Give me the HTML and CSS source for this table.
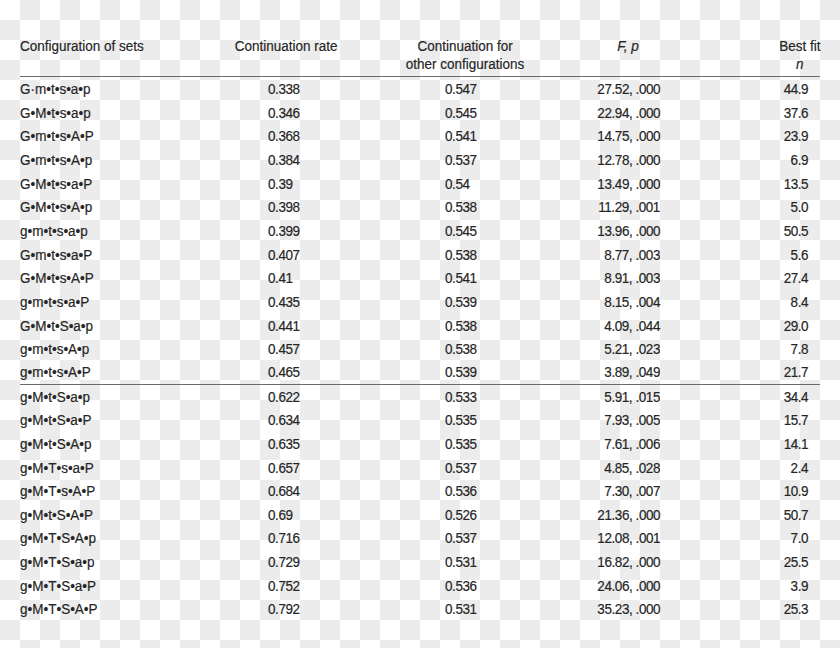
FILE: index.html
```html
<!DOCTYPE html>
<html lang="en">
<head>
<meta charset="utf-8">
<title>Configuration of sets</title>
<link rel="stylesheet" href="styles.css">
</head>
<body>
<div class="table">
  <div class="head">
    <div class="c1"><span class="t">Configuration of sets</span></div>
    <div class="c2h"><span class="t">Continuation rate</span></div>
    <div class="c3h"><span class="t">Continuation for<br>other configurations</span></div>
    <div class="c4h"><span class="t"><i>F, p</i></span></div>
    <div class="c5h"><span class="t stack">Best fit<br><i>n</i></span></div>
  </div>
  <div class="row"><div class="c1"><span class="t">G·m•t•s•a•p</span></div><div class="c2"><span class="t">0.338</span></div><div class="c3"><span class="t">0.547</span></div><div class="c4"><span class="t">27.52, .000</span></div><div class="c5"><span class="t">44.9</span></div></div>
  <div class="row"><div class="c1"><span class="t">G•M•t•s•a•p</span></div><div class="c2"><span class="t">0.346</span></div><div class="c3"><span class="t">0.545</span></div><div class="c4"><span class="t">22.94, .000</span></div><div class="c5"><span class="t">37.6</span></div></div>
  <div class="row"><div class="c1"><span class="t">G•m•t•s•A•P</span></div><div class="c2"><span class="t">0.368</span></div><div class="c3"><span class="t">0.541</span></div><div class="c4"><span class="t">14.75, .000</span></div><div class="c5"><span class="t">23.9</span></div></div>
  <div class="row"><div class="c1"><span class="t">G•m•t•s•A•p</span></div><div class="c2"><span class="t">0.384</span></div><div class="c3"><span class="t">0.537</span></div><div class="c4"><span class="t">12.78, .000</span></div><div class="c5"><span class="t">6.9</span></div></div>
  <div class="row"><div class="c1"><span class="t">G•M•t•s•a•P</span></div><div class="c2"><span class="t">0.39</span></div><div class="c3"><span class="t">0.54</span></div><div class="c4"><span class="t">13.49, .000</span></div><div class="c5"><span class="t">13.5</span></div></div>
  <div class="row"><div class="c1"><span class="t">G•M•t•s•A•p</span></div><div class="c2"><span class="t">0.398</span></div><div class="c3"><span class="t">0.538</span></div><div class="c4"><span class="t">11.29, .001</span></div><div class="c5"><span class="t">5.0</span></div></div>
  <div class="row"><div class="c1"><span class="t">g•m•t•s•a•p</span></div><div class="c2"><span class="t">0.399</span></div><div class="c3"><span class="t">0.545</span></div><div class="c4"><span class="t">13.96, .000</span></div><div class="c5"><span class="t">50.5</span></div></div>
  <div class="row"><div class="c1"><span class="t">G•m•t•s•a•P</span></div><div class="c2"><span class="t">0.407</span></div><div class="c3"><span class="t">0.538</span></div><div class="c4"><span class="t">8.77, .003</span></div><div class="c5"><span class="t">5.6</span></div></div>
  <div class="row"><div class="c1"><span class="t">G•M•t•s•A•P</span></div><div class="c2"><span class="t">0.41</span></div><div class="c3"><span class="t">0.541</span></div><div class="c4"><span class="t">8.91, .003</span></div><div class="c5"><span class="t">27.4</span></div></div>
  <div class="row"><div class="c1"><span class="t">g•m•t•s•a•P</span></div><div class="c2"><span class="t">0.435</span></div><div class="c3"><span class="t">0.539</span></div><div class="c4"><span class="t">8.15, .004</span></div><div class="c5"><span class="t">8.4</span></div></div>
  <div class="row"><div class="c1"><span class="t">G•M•t•S•a•p</span></div><div class="c2"><span class="t">0.441</span></div><div class="c3"><span class="t">0.538</span></div><div class="c4"><span class="t">4.09, .044</span></div><div class="c5"><span class="t">29.0</span></div></div>
  <div class="row"><div class="c1"><span class="t">g•m•t•s•A•p</span></div><div class="c2"><span class="t">0.457</span></div><div class="c3"><span class="t">0.538</span></div><div class="c4"><span class="t">5.21, .023</span></div><div class="c5"><span class="t">7.8</span></div></div>
  <div class="row split"><div class="c1"><span class="t">g•m•t•s•A•P</span></div><div class="c2"><span class="t">0.465</span></div><div class="c3"><span class="t">0.539</span></div><div class="c4"><span class="t">3.89, .049</span></div><div class="c5"><span class="t">21.7</span></div></div>
  <div class="row"><div class="c1"><span class="t">g•M•t•S•a•p</span></div><div class="c2"><span class="t">0.622</span></div><div class="c3"><span class="t">0.533</span></div><div class="c4"><span class="t">5.91, .015</span></div><div class="c5"><span class="t">34.4</span></div></div>
  <div class="row"><div class="c1"><span class="t">g•M•t•S•a•P</span></div><div class="c2"><span class="t">0.634</span></div><div class="c3"><span class="t">0.535</span></div><div class="c4"><span class="t">7.93, .005</span></div><div class="c5"><span class="t">15.7</span></div></div>
  <div class="row"><div class="c1"><span class="t">g•M•t•S•A•p</span></div><div class="c2"><span class="t">0.635</span></div><div class="c3"><span class="t">0.535</span></div><div class="c4"><span class="t">7.61, .006</span></div><div class="c5"><span class="t">14.1</span></div></div>
  <div class="row"><div class="c1"><span class="t">g•M•T•s•a•P</span></div><div class="c2"><span class="t">0.657</span></div><div class="c3"><span class="t">0.537</span></div><div class="c4"><span class="t">4.85, .028</span></div><div class="c5"><span class="t">2.4</span></div></div>
  <div class="row"><div class="c1"><span class="t">g•M•T•s•A•P</span></div><div class="c2"><span class="t">0.684</span></div><div class="c3"><span class="t">0.536</span></div><div class="c4"><span class="t">7.30, .007</span></div><div class="c5"><span class="t">10.9</span></div></div>
  <div class="row"><div class="c1"><span class="t">g•M•t•S•A•P</span></div><div class="c2"><span class="t">0.69</span></div><div class="c3"><span class="t">0.526</span></div><div class="c4"><span class="t">21.36, .000</span></div><div class="c5"><span class="t">50.7</span></div></div>
  <div class="row"><div class="c1"><span class="t">g•M•T•S•A•p</span></div><div class="c2"><span class="t">0.716</span></div><div class="c3"><span class="t">0.537</span></div><div class="c4"><span class="t">12.08, .001</span></div><div class="c5"><span class="t">7.0</span></div></div>
  <div class="row"><div class="c1"><span class="t">g•M•T•S•a•p</span></div><div class="c2"><span class="t">0.729</span></div><div class="c3"><span class="t">0.531</span></div><div class="c4"><span class="t">16.82, .000</span></div><div class="c5"><span class="t">25.5</span></div></div>
  <div class="row"><div class="c1"><span class="t">g•M•T•S•a•P</span></div><div class="c2"><span class="t">0.752</span></div><div class="c3"><span class="t">0.536</span></div><div class="c4"><span class="t">24.06, .000</span></div><div class="c5"><span class="t">3.9</span></div></div>
  <div class="row"><div class="c1"><span class="t">g•M•T•S•A•P</span></div><div class="c2"><span class="t">0.792</span></div><div class="c3"><span class="t">0.531</span></div><div class="c4"><span class="t">35.23, .000</span></div><div class="c5"><span class="t">25.3</span></div></div>
</div>
</body>
</html>
```
FILE: styles.css
```css
html, body {
  margin: 0;
  padding: 0;
}
body {
  width: 840px;
  height: 648px;
  overflow: hidden;
  background: repeating-conic-gradient(#ececec 0 25%, #ffffff 0 50%) 0 0 / 40px 40px;
  font-family: "Liberation Sans", Arial, sans-serif;
  font-size: 15.5px;
  color: #252525;
  -webkit-text-stroke: 0.2px #252525;
}
.table {
  margin-left: 20px;
  width: 800px;
}
.head, .row {
  display: grid;
  grid-template-columns: 186px 160px 182px 132px 140px;
}
.head {
  padding-top: 37px;
  padding-bottom: 3px;
  line-height: 18px;
  border-bottom: 1.5px solid #6a6a6a;
}
.row {
  height: 23.67px;
  line-height: 23.67px;
  box-sizing: border-box;
}
.row.split {
  border-bottom: 1.5px solid #6a6a6a;
  line-height: 22.17px;
}
/* condensed face: each text run is compressed horizontally about its aligned edge */
.t {
  display: inline-block;
  white-space: nowrap;
  transform: scaleX(0.87);
}
.c1 { text-align: left; }
.c1 .t, .c2 .t, .c3 .t { transform-origin: left center; }
.c4 .t, .c5 .t, .c4h .t, .c5h .t { transform-origin: right center; }
.c2h, .c3h { text-align: center; }
.c3h { padding-left: 16px; }
.c2h .t, .c3h .t { transform-origin: center center; }
.c4h { text-align: right; padding-right: 41px; }
.c5h { text-align: right; }
.stack { text-align: center; }
.c2, .c3, .c4, .c5 { letter-spacing: -0.5px; }
.c2 { padding-left: 62px; }
.c3 { padding-left: 79px; }
.c4 { text-align: right; padding-right: 20px; }
.c5 { text-align: right; padding-right: 12px; }
```
